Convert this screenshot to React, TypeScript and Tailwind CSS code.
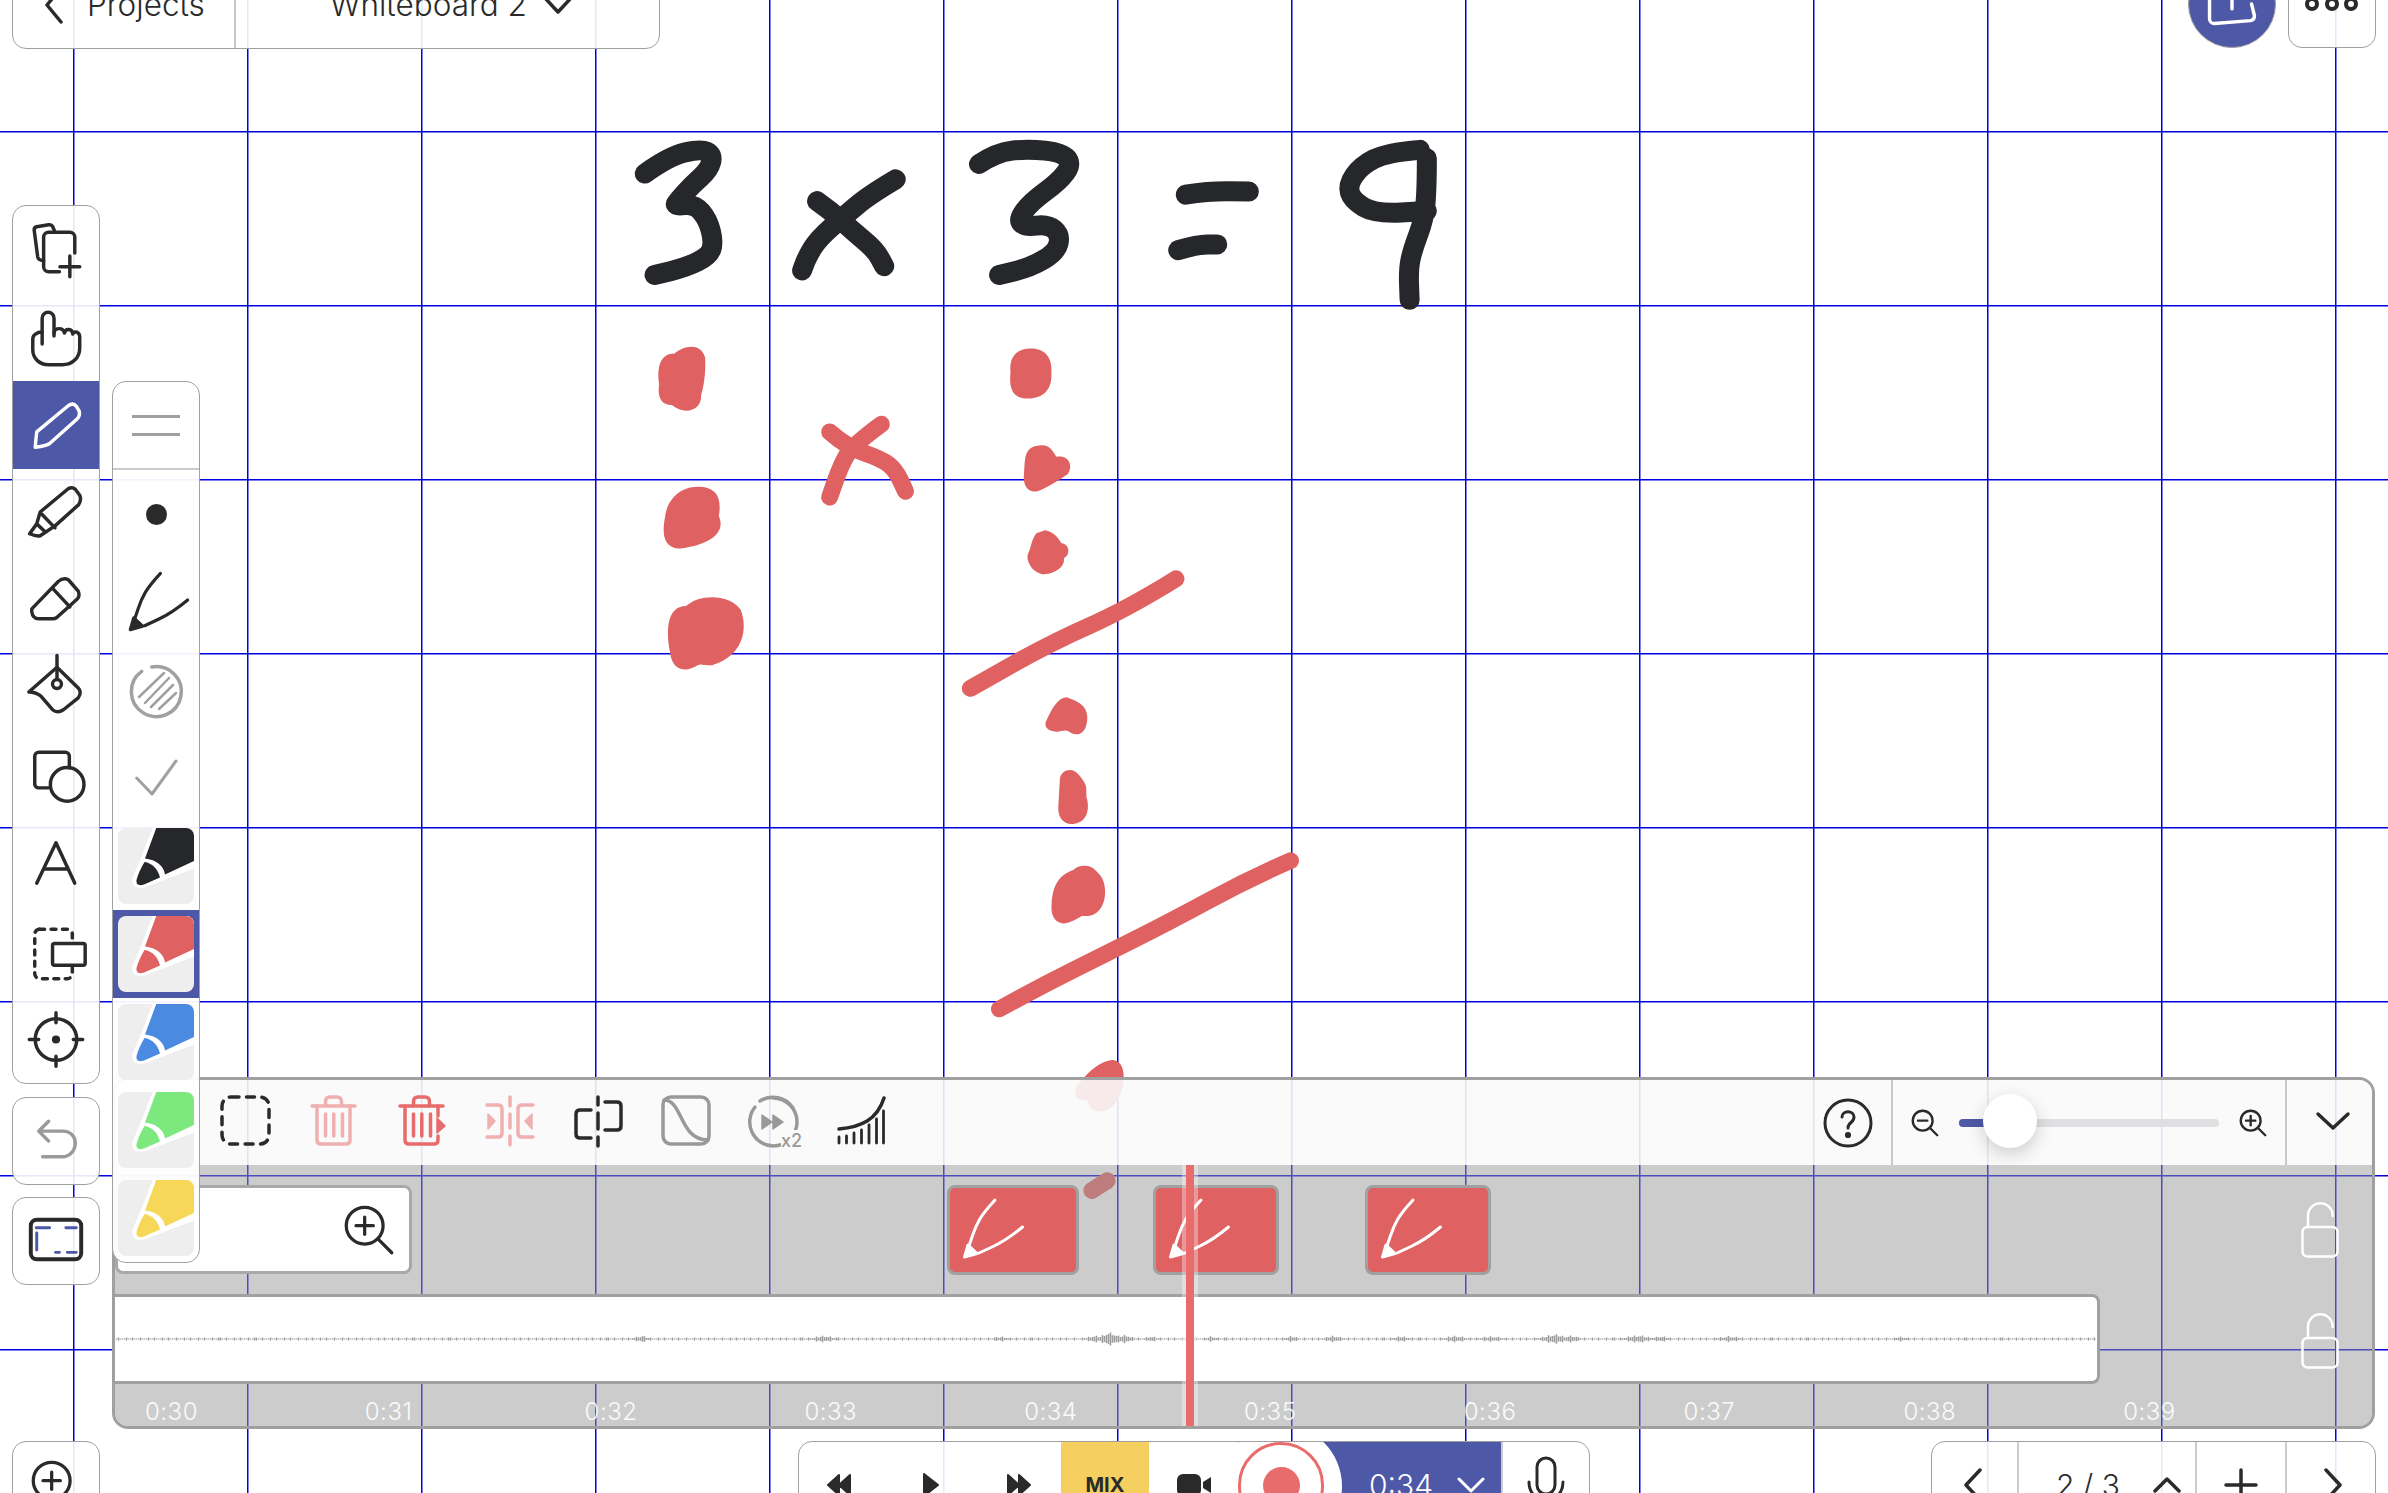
import React from "react";

const INK = "#26272b";
const RED = "#e06161";
const BLUE = "#4d58a6";

type Pt = [number, number];

// turns sampled pen points into a soft curve
function smooth(pts: Pt[]) {
  let d = `M${pts[0][0]} ${pts[0][1]}`;
  for (let i = 1; i < pts.length - 1; i++) {
    const mx = (pts[i][0] + pts[i + 1][0]) / 2;
    const my = (pts[i][1] + pts[i + 1][1]) / 2;
    d += ` Q${pts[i][0]} ${pts[i][1]} ${mx} ${my}`;
  }
  const last = pts[pts.length - 1];
  return d + ` L${last[0]} ${last[1]}`;
}

const blackStrokes: Pt[][] = [
  [[78, 140], [120, 95], [175, 75], [197, 90], [190, 130], [160, 170], [135, 212], [130, 225], [165, 220], [188, 260], [198, 320], [190, 355], [150, 385], [95, 405]],
  [[378, 212], [400, 235], [440, 290], [480, 340], [495, 382]],
  [[515, 155], [470, 195], [430, 245], [380, 310], [360, 360], [352, 393]],
  [[660, 115], [690, 85], [745, 75], [805, 85], [822, 115], [800, 160], [750, 215], [728, 260], [740, 280], [780, 272], [802, 300], [795, 345], [750, 385], [695, 405]],
  [[1020, 195], [1060, 186], [1130, 187]],
  [[1007, 340], [1040, 325], [1075, 325]],
  [[1428, 78], [1370, 85], [1325, 120], [1302, 170], [1310, 210], [1350, 245], [1440, 238]],
  [[1440, 100], [1440, 180], [1435, 260], [1415, 340], [1408, 390], [1410, 470]],
];

const redStrokes: Pt[][] = [
  [[400, 815], [430, 855], [490, 885], [515, 915], [532, 970]],
  [[490, 795], [440, 850], [420, 900], [400, 985]],
];

const redBlobs = [
  "M130 610 C145 590 175 580 183 620 C185 660 180 700 176 720 C178 755 150 775 125 745 C105 745 100 720 103 690 C100 660 100 610 130 610 Z",
  "M170 958 C205 958 212 990 207 1035 C220 1080 190 1110 140 1120 C110 1120 108 1080 113 1040 C115 1000 135 958 170 958 Z",
  "M150 1270 C170 1240 225 1235 245 1280 C258 1330 250 1400 195 1425 C180 1425 175 1420 170 1425 C150 1445 125 1440 122 1390 C115 1340 115 1270 150 1270 Z",
  "M750 597 C780 597 788 630 786 660 C788 700 775 728 745 728 C718 728 712 700 715 660 C712 620 725 597 750 597 Z",
  "M770 850 C785 850 790 870 795 880 C815 875 825 900 815 925 C795 945 780 960 762 970 C745 975 738 955 738 935 C740 900 738 870 750 858 C755 852 765 850 770 850 Z",
  "M775 1072 C790 1075 800 1095 803 1105 C818 1108 820 1135 808 1145 C810 1170 790 1187 770 1187 C750 1180 742 1150 745 1135 C752 1115 750 1100 760 1080 Z",
];

const lowerBlobs = [
  "M500 -8 C520 0 560 10 562 50 C562 95 540 110 515 100 C495 85 490 95 470 95 C440 95 430 75 440 60 C455 30 470 -5 500 -8 Z",
  "M510 210 C530 210 545 235 552 245 C565 265 555 280 562 300 C570 345 550 372 515 372 C485 372 473 345 475 320 C477 290 478 260 480 235 C482 220 495 210 510 210 Z",
  "M555 497 C580 497 590 515 600 525 C617 545 622 590 605 620 C590 645 570 650 545 648 C525 660 505 672 485 670 C460 665 452 640 455 610 C458 560 475 525 520 510 C530 500 540 497 555 497 Z",
  "M635 1080 C665 1080 675 1110 670 1150 C665 1200 630 1235 600 1235 C575 1235 565 1215 560 1200 C535 1205 515 1185 530 1160 C555 1125 595 1085 635 1080 Z",
];

function Whiteboard() {
  const vertical = Array.from({ length: 14 }, (_, i) => 73.75 + i * 174);
  const horizontal = Array.from({ length: 8 }, (_, i) => 131.75 + i * 174);
  return (
    <svg className="absolute inset-0" width="2388" height="1493" viewBox="0 0 2388 1493" fill="none">
      {vertical.map((x) => (
        <line key={x} x1={x} y1="0" x2={x} y2="1493" stroke="#0000e0" strokeWidth="1.5" />
      ))}
      {horizontal.map((y) => (
        <line key={y} x1="0" y1={y} x2="2388" y2={y} stroke="#0000e0" strokeWidth="1.5" />
      ))}
      <g transform="translate(600 120) scale(0.5742 0.3827)" strokeLinecap="round" strokeLinejoin="round">
        {blackStrokes.map((s, i) => (
          <path key={i} d={smooth(s)} stroke={INK} strokeWidth="20" vectorEffect="non-scaling-stroke" />
        ))}
        {redStrokes.map((s, i) => (
          <path key={i} d={smooth(s)} stroke={RED} strokeWidth="17" vectorEffect="non-scaling-stroke" />
        ))}
        {redBlobs.map((d, i) => (
          <path key={i} d={d} fill={RED} />
        ))}
        <path d={smooth([[1003, 1199], [918, 1278], [785, 1366], [645, 1485]])} stroke={RED} strokeWidth="17" vectorEffect="non-scaling-stroke" />
      </g>
      <g transform="translate(900 700) scale(0.3333)" strokeLinecap="round">
        {lowerBlobs.map((d, i) => (
          <path key={i} d={d} fill={RED} />
        ))}
        <path d={smooth([[1172, 482], [1050, 535], [800, 670], [600, 770], [440, 850], [298, 927]])} stroke={RED} strokeWidth="50" />
        <path d="M575 1472 L622 1442" stroke={RED} strokeWidth="50" />
      </g>
    </svg>
  );
}

const panel = "absolute bg-white/90 border-[1.5px] border-[#a0a0a0] rounded-[14px]";

function Glyph({ children, className = "", w = 87, h = 88, sw = 3.5 }: { children: React.ReactNode; className?: string; w?: number; h?: number; sw?: number }) {
  return (
    <svg viewBox={`0 0 ${w} ${h}`} width={w} height={h} className={className} fill="none" stroke="currentColor" strokeWidth={sw} strokeLinecap="round" strokeLinejoin="round">
      {children}
    </svg>
  );
}

const tools: React.ReactNode[] = [
  <>
    <path d="M42.5 26 L40 20 Q39 18 36 18.5 L24 20.5 Q21 21 21.5 24.5 L25 51 Q25.5 54 31 55" />
    <path d="M62.5 47 V31 a5 5 0 0 0 -5 -5 H36 a5 5 0 0 0 -5 5 V61 a5 5 0 0 0 5 5 H47" />
    <path d="M47.5 61 H67.5 M57.5 50 V71" />
  </>,
  <>
    <path d="M29.5 50 V24 a6 6 0 0 1 12 0 V42" />
    <path d="M41.5 39 C42 33 51 33 52 39 M52 39 C53 34 60 34 60.5 40 C62 36 67.5 38 67.5 43 V54 C67.5 64 60 71 50 71 H36 C27 71 20 65 20 56 V45 C20 41 24 38 29.5 38" />
  </>,
  <path d="M24 51 L55.8 24.5 Q61 21 64 25 L67 30 Q68 35 64.8 38 L36.8 63 Q34 65 22.5 66.5 Q23 60 24 51 Z" />,
  <>
    <path d="M27.5 43 L55.8 19.5 Q60 17 63 20 L67.5 26 Q69.5 31 66.5 35.5 L42.5 57 L27.5 67 Q24 68 16.8 65 L24 55 Z" />
    <path d="M29 45 L42.5 59 M24 55 L32.5 63" />
  </>,
  <>
    <path d="M19 52 L46 24 Q51 20 56 22.5 L66 34 Q68 39 65 42 L44 61 Q42.5 62 40 62 H26 Q20 62 19 55 Z" />
    <path d="M40.8 32 L57.5 50" />
  </>,
  <>
    <path d="M44.5 11 V35" />
    <circle cx="44.5" cy="40" r="4.5" />
    <path d="M44.5 23 L16 48 Q23 48 28 52 L40 66 Q45 70 51 66 L66 54 Q70 48 66 44 Z" />
  </>,
  <>
    <path d="M36 56 H26 a4 4 0 0 1 -4 -4 V24 a4 4 0 0 1 4 -4 H53 a4 4 0 0 1 4 4 V36" />
    <circle cx="54.8" cy="52.5" r="17" />
  </>,
  <path d="M24 63.5 L43.5 22.6 L62.5 63.5 M32 49 H56" />,
  <>
    <rect x="22" y="22" width="38" height="50" rx="5" strokeDasharray="5 6.5" />
    <rect x="40" y="36.5" width="33" height="22" rx="2" fill="#fff" />
  </>,
  <>
    <circle cx="43.5" cy="44.5" r="21" />
    <path d="M43.5 17.5 V27.5 M43.5 61.5 V71.5 M16.5 44.5 H26 M61 44.5 H70.5" />
    <circle cx="43.5" cy="44.5" r="2.4" fill="currentColor" />
  </>,
];

function PenTip({ color, sw = 3 }: { color: string; sw?: number }) {
  return (
    <g stroke={color} strokeWidth={sw} fill="none" strokeLinecap="round" strokeLinejoin="round">
      <path d={smooth([[48, 15], [37, 27], [28.7, 41], [22, 61]])} />
      <path d={smooth([[75.5, 42], [60, 55], [32, 68]])} />
      <path d="M21 60 L17.5 72 L30 68.5 Z" fill={color} />
    </g>
  );
}

function Swatch({ color, selected }: { color: string; selected?: boolean }) {
  return (
    <div className={selected ? "flex h-[88px] items-center justify-center bg-[#4d58a6]" : "flex h-[88px] items-center justify-center"}>
      <svg viewBox="0 0 76 76" className="h-[76px] w-[76px] overflow-hidden rounded-[8px] bg-[#eeeeee]">
        <path d="M37 -2 L24.5 30 L16 50 Q14 60 26 58 L78 38 V-2 Z" fill="#fff" stroke="#fff" strokeWidth="3" />
        <path d="M39 -2 H70 Q76 -2 76 6 V33 L47 46.5 C46 38 38 31.5 27 30.5 Z" fill={color} />
        <path d="M26.5 34 C34 35 40 41 42 49.5 L26 56.5 C21 58 18 57 18.5 52 C20 46 23 40 26.5 34 Z" fill={color} />
      </svg>
    </div>
  );
}

function PenPanel() {
  return (
    <div className={`${panel} left-[112px] top-[381px] z-20 w-[88px] overflow-hidden !bg-white/95`}>
      <div className="flex h-[88px] flex-col items-center justify-center gap-[15px] border-b-2 border-[#cccccc]">
        <div className="h-[3px] w-[48px] bg-[#a0a0a0]" />
        <div className="h-[3px] w-[48px] bg-[#a0a0a0]" />
      </div>
      <div className="flex h-[88px] items-center justify-center">
        <div className="h-[21px] w-[21px] rounded-full bg-[#2a2a2a]" />
      </div>
      <svg viewBox="0 0 87 88" className="block h-[88px] w-full">
        <PenTip color="#2a2a2a" sw={3.2} />
      </svg>
      <div className="text-[#a0a0a0]">
        <Glyph sw={3.5} className="block">
          <path d="M38.7 21 A25 25 0 1 1 28.7 25.3" />
          <path d="M26 51 L51 27 M32 57 L56 32 M38 61 L60 39 M46 63 L63 47" strokeWidth="2.5" />
        </Glyph>
        <Glyph sw={3} className="block">
          <path d="M23.7 44 L39 60 L63 27" />
        </Glyph>
      </div>
      <Swatch color={INK} />
      <Swatch color={RED} selected />
      <Swatch color="#4a8ae0" />
      <Swatch color="#7de87e" />
      <Swatch color="#f7d758" />
    </div>
  );
}

function Trash({ color, arrow }: { color: string; arrow?: boolean }) {
  return (
    <Glyph w={88} h={85} className="block" sw={3.5}>
      <g stroke={color}>
        <path d="M23 26 H66 M36.5 25 V22 Q36.5 17 41 17 H48 Q52.5 17 52.5 22 V25" />
        {arrow ? (
          <path d="M28 26 V60 Q28 64 32 64 H57 Q61 64 61 60 V56 M61 26 V36" />
        ) : (
          <path d="M28 26 V60 Q28 64 32 64 H57 Q61 64 61 60 V26" />
        )}
        <path d="M36.5 34 V56 M44.8 34 V56 M53.5 34 V56" />
        {arrow && <path d="M60 38 L68 46 L60 53 Z" fill={color} strokeWidth="1.5" />}
      </g>
    </Glyph>
  );
}

const timelineTools: React.ReactNode[] = [
  <Glyph w={88} h={85} className="block text-[#2a2a2a]">
    <rect x="21" y="17" width="47" height="47" rx="9" strokeDasharray="8 7.5" />
  </Glyph>,
  <Trash color="#f0b0b0" />,
  <Trash color="#e86b6b" arrow />,
  <Glyph w={88} h={85} className="block text-[#f0b0b0]">
    <path d="M45 17 V26 M45 34 V48 M45 56 V65" />
    <path d="M22 25 H33 Q37 25 37 29 V53 Q37 57 33 57 H22" />
    <path d="M68 25 H57 Q53 25 53 29 V53 Q53 57 57 57 H68" />
    <path d="M23 34 L30 41 L23 49 Z M67 34 L60 41 L67 49 Z" fill="currentColor" strokeWidth="1.5" />
  </Glyph>,
  <Glyph w={88} h={85} className="block text-[#2a2a2a]">
    <path d="M45 17 V25 M45 33 V49 M45 57 V66" />
    <path d="M38 30 H27 Q23 30 23 34 V54 Q23 58 27 58 H38" />
    <path d="M52 22 H64 Q68 22 68 26 V46 Q68 50 64 50 H52" />
  </Glyph>,
  <Glyph w={88} h={85} className="block text-[#999999]">
    <rect x="22" y="17" width="46" height="47" rx="8" />
    <path d="M23 20 C42 20 38 60 67 60" />
  </Glyph>,
  <Glyph w={88} h={85} className="block text-[#999999]">
    <path d="M44 18 A24 24 0 1 1 44 66 A24 24 0 0 1 26 27 M31 21 A24 24 0 0 1 64 28 " />
    <path d="M33 35 L43 42 L33 49 Z M44 35 L54 42 L44 49 Z" fill="currentColor" strokeWidth="1.5" />
    <rect x="52" y="50" width="24" height="20" fill="#fafafa" stroke="none" />
    <text x="52" y="67" fontFamily="Inter, sans-serif" fontSize="18" fill="currentColor" stroke="none" fontWeight="500">x2</text>
  </Glyph>,
  <Glyph w={88} h={85} className="block text-[#2a2a2a]">
    <path d="M22 63 V57 M29.5 63 V56 M37 63 V53 M44.5 63 V50 M52 63 V45 M59.5 63 V39 M66.5 63 V31" strokeWidth="2.8" />
    <path d="M22 49 C44 47 60 40 67 18" />
  </Glyph>,
];

function Magnifier({ size, plus, minus, sw = 3.5 }: { size: number; plus?: boolean; minus?: boolean; sw?: number }) {
  return (
    <svg viewBox="0 0 48 48" width={size} height={size} fill="none" stroke="#2a2a2a" strokeWidth={sw} strokeLinecap="round">
      <circle cx="20" cy="20" r="17" />
      <path d="M32.5 32.5 L45 45" />
      {(plus || minus) && <path d="M12 20 H28" />}
      {plus && <path d="M20 12 V28" />}
    </svg>
  );
}

function Waveform() {
  const bursts: [number, number, number][] = [
    [822, 8, 2], [1092, 5, 2], [1108, 8, 5.5], [1124, 5, 3], [1150, 4, 1.5], [1332, 6, 2], [1454, 8, 2], [1553, 10, 3.5], [1570, 5, 2],
    [1637, 10, 2.5], [1660, 6, 1.5], [1728, 8, 1.5], [1290, 5, 1.5], [640, 6, 1.5], [1000, 5, 1], [1900, 5, 1], [1400, 6, 1.5], [1490, 8, 1.5], [1210, 4, 1.5],
  ];
  let d = "";
  for (let x = 0; x < 1979; x += 2) {
    const abs = x + 115;
    const noise = ((abs * 7919) % 97) / 97;
    let a = 0.6 + (noise > 0.7 ? 0.9 : 0);
    for (const [c, w, h] of bursts) {
      const k = (abs - c) / w;
      a += h * Math.exp(-k * k) * (0.6 + 0.4 * noise);
    }
    d += `M${x} ${(42 - a).toFixed(1)}V${(42 + a).toFixed(1)}`;
  }
  return (
    <svg viewBox="0 0 1979 84" className="h-full w-full" fill="none">
      <path d={d} stroke="#9c9c9c" strokeWidth="1.5" />
    </svg>
  );
}

function Lock({ className }: { className: string }) {
  return (
    <svg viewBox="0 0 38 56" width="38" height="56" fill="none" stroke="#fff" strokeWidth="2.5" strokeLinecap="round" className={className}>
      <rect x="1.5" y="25" width="35" height="29.5" rx="5" />
      <path d="M7 25 V13.5 a12.3 12.3 0 0 1 24.7 0 V14" />
    </svg>
  );
}

const clips = ["left-[832px] w-[132px]", "left-[1038px] w-[126px]", "left-[1250px] w-[126px]"];

function Timeline() {
  const labels = ["0:30", "0:31", "0:32", "0:33", "0:34", "0:35", "0:36", "0:37", "0:38", "0:39"];
  return (
    <div className="absolute left-[112px] top-[1077px] z-10 flex h-[352px] w-[2263px] flex-col overflow-hidden rounded-2xl border-[3px] border-[#a0a0a0]">
      <div className="flex h-[85px] shrink-0 items-center bg-[#fafafa]/90 pl-[86px]">
        {timelineTools.map((icon, i) => (
          <div key={i} className="flex h-full w-[88px] items-center justify-center">
            {icon}
          </div>
        ))}
        <div className="flex-1" />
        <div className="flex h-full w-[88px] items-center justify-center border-r-2 border-[#c8c8c8]">
          <svg viewBox="0 0 50 50" width="50" height="50" fill="none" stroke="#2a2a2a" strokeWidth="3" strokeLinecap="round">
            <circle cx="25" cy="25" r="23" />
            <path d="M19 19 C19 12 31 12 31 19 C31 25 25 24 25 30" />
            <circle cx="25" cy="37" r="1.6" fill="#2a2a2a" />
          </svg>
        </div>
        <div className="flex h-full w-[394px] items-center border-r-2 border-[#c8c8c8] pl-[18px]">
          <Magnifier size={28} minus sw={4} />
          <div className="relative mx-[20px] h-[8px] w-[260px] rounded-full bg-[#dfdfe2]">
            <div className="h-full w-[50px] rounded-l-full bg-[#4d58a6]" />
            <div className="absolute left-[24px] top-[-25px] h-[54px] w-[54px] rounded-full bg-white shadow-[0_6px_18px_rgba(0,0,0,0.18)]" />
          </div>
          <Magnifier size={28} plus sw={4} />
        </div>
        <div className="flex h-full w-[85px] items-center justify-center pb-[4px] pl-[6px]">
          <Glyph w={36} h={20} sw={3.5} className="text-[#2a2a2a]">
            <path d="M3 3 L18 17 L33 3" />
          </Glyph>
        </div>
      </div>

      <div className="relative flex-1 bg-[#999999]/50">
        <div className="relative h-[129px]">
          <div className="absolute left-0 top-[20px] flex h-[89px] w-[297px] items-center justify-end rounded-lg border-[3px] border-[#a8a8a8] bg-white pr-[14px]">
            <Magnifier size={52} plus sw={3} />
          </div>
          {clips.map((pos) => (
            <div key={pos} className={`absolute top-[20px] h-[90px] rounded-lg border-[3px] border-[#a0a0a0] bg-[#e06161] ${pos}`}>
              <svg viewBox="0 0 126 84" width="126" height="84" className="-ml-[3px] -mt-[3px]">
                <PenTip color="#fff" />
              </svg>
            </div>
          ))}
          <Lock className="absolute right-[33px] top-[37px]" />
        </div>
        <div className="relative h-[90px]">
          <div className="h-full w-[1985px] rounded-r-lg border-y-[3px] border-r-[3px] border-[#a0a0a0] bg-white">
            <Waveform />
          </div>
          <Lock className="absolute right-[33px] top-[19px]" />
        </div>
        <div className="flex h-[42px] items-center pl-[30px] pt-[14px] text-[24px] font-light tracking-[0.5px] text-white/90">
          {labels.map((t) => (
            <div key={t} className="w-[219.8px] shrink-0">
              {t}
            </div>
          ))}
        </div>
        <div className="absolute inset-y-0 left-[1067px] w-[16px] bg-white/35" />
        <div className="absolute inset-y-0 left-[1071px] w-[8px] bg-[#e96c6c]" />
      </div>
    </div>
  );
}

function Triangles({ dir }: { dir: "left" | "right" }) {
  return (
    <svg viewBox="0 0 26 24" width="26" height="24" fill="#2a2a2a" stroke="#2a2a2a" strokeWidth="2" strokeLinejoin="round" className={dir === "left" ? "-scale-x-100" : ""}>
      <path d="M2 2 L13 12 L2 22 Z M13 2 L24 12 L13 22 Z" />
    </svg>
  );
}

function RecordBar() {
  return (
    <div className={`${panel} left-[798px] top-[1441px] flex h-[88px] w-[792px] overflow-hidden`}>
      <div className="flex h-full w-[80px] items-center justify-center">
        <Triangles dir="left" />
      </div>
      <div className="flex h-full w-[104px] items-center justify-center">
        <svg viewBox="0 0 18 26" width="18" height="26" fill="#2a2a2a" stroke="#2a2a2a" strokeWidth="2" strokeLinejoin="round">
          <path d="M2 2 L16 13 L2 24 Z" />
        </svg>
      </div>
      <div className="flex h-full w-[78px] items-center justify-center pr-[6px]">
        <Triangles dir="right" />
      </div>
      <div className="flex h-full w-[88px] items-center justify-center bg-[#f5d060] text-[20px] font-bold text-[#2a2a2a]">MIX</div>
      <div className="flex h-full w-[89px] items-center justify-center">
        <svg viewBox="0 0 34 22" width="34" height="22" fill="#2a2a2a">
          <rect x="0" y="0" width="24" height="22" rx="6" />
          <path d="M26 8 L34 3 V19 L26 14 Z" />
        </svg>
      </div>
      <div className="relative flex h-full w-[263px] items-center bg-[#4d58a6] pl-[131px] text-[30px] font-light text-white">
        <div className="absolute left-[-18px] top-[-17px] h-[122px] w-[122px] rounded-full bg-white" />
        <div className="absolute left-0 top-0 flex h-[87px] w-[86px] items-center justify-center rounded-full border-[3px] border-[#e96c6c]">
          <div className="h-[37px] w-[37px] rounded-full bg-[#e96c6c]" />
        </div>
        <span>0:34</span>
        <svg viewBox="0 0 28 16" width="28" height="16" fill="none" stroke="#fff" strokeWidth="3" strokeLinecap="round" strokeLinejoin="round" className="ml-[24px]">
          <path d="M2 2 L14 14 L26 2" />
        </svg>
      </div>
      <div className="flex h-full flex-1 items-center justify-center border-l-2 border-[#cccccc]">
        <svg viewBox="0 0 38 56" width="38" height="56" fill="none" stroke="#2a2a2a" strokeWidth="3" strokeLinecap="round" className="mt-[-2px]">
          <rect x="10" y="2" width="18" height="36" rx="9" />
          <path d="M2 26 C2 50 36 50 36 26 M19 44 V54" />
        </svg>
      </div>
    </div>
  );
}

function PageBar() {
  return (
    <div className={`${panel} left-[1931px] top-[1441px] flex h-[88px] w-[445px] overflow-hidden text-[#2a2a2a]`}>
      <div className="flex h-full w-[87px] items-center justify-center border-r-2 border-[#cccccc] pr-[4px]">
        <Glyph w={20} h={36} sw={3.5}>
          <path d="M17 3 L3 18 L17 33" />
        </Glyph>
      </div>
      <div className="flex h-full w-[178px] items-center border-r-2 border-[#cccccc] pl-[37px] text-[30px] font-light">
        <span>2 / 3</span>
        <Glyph w={30} h={18} sw={3.5} className="ml-[32px]">
          <path d="M3 15 L15 3 L27 15" />
        </Glyph>
      </div>
      <div className="flex h-full w-[90px] items-center justify-center border-r-2 border-[#cccccc]">
        <Glyph w={34} h={34} sw={3.5}>
          <path d="M2 17 H32 M17 2 V32" />
        </Glyph>
      </div>
      <div className="flex h-full flex-1 items-center justify-center pl-[4px]">
        <Glyph w={20} h={36} sw={3.5}>
          <path d="M3 3 L17 18 L3 33" />
        </Glyph>
      </div>
    </div>
  );
}

export default function App() {
  return (
    <div className="relative h-[1493px] w-[2388px] overflow-hidden bg-white font-['Inter',sans-serif] text-[#2a2a2a]">
      <Whiteboard />

      {/* top left */}
      <div className={`${panel} left-[12px] top-[-39px] flex h-[88px] w-[648px] items-center overflow-hidden text-[31.5px] font-light`}>
        <div className="flex h-full w-[223px] items-center border-r-2 border-[#c8c8c8] pl-[31px]">
          <Glyph w={20} h={40} sw={3.5} className="mr-[23px]">
            <path d="M17 3 L3 20 L17 37" />
          </Glyph>
          <span>Projects</span>
        </div>
        <div className="flex h-full flex-1 items-center pl-[94px]">
          <span>Whiteboard 2</span>
          <Glyph w={32} h={20} sw={3.5} className="ml-[15px]">
            <path d="M3 3 L16 17 L29 3" />
          </Glyph>
        </div>
      </div>

      {/* top right */}
      <div className="absolute left-[2188px] top-[-40px] flex h-[88px] w-[88px] items-center justify-center rounded-full border border-[#a0a0a0] bg-[#4d58a6]">
        <svg viewBox="0 0 88 88" width="88" height="88" fill="none" stroke="#fff" strokeWidth="3.5" strokeLinecap="round" strokeLinejoin="round">
          <path d="M21 30 V59 a5 5 0 0 0 5 5 L63 61 a5 5 0 0 0 4 -5 L64 44" />
          <path d="M44 20 V49" />
        </svg>
      </div>
      <div className={`${panel} left-[2288px] top-[-40px] flex h-[88px] w-[88px] items-center justify-center`}>
        <svg viewBox="0 0 64 16" width="64" height="16" fill="none" stroke="#2a2a2a" strokeWidth="4">
          <circle cx="12" cy="8" r="5" />
          <circle cx="32" cy="8" r="5" />
          <circle cx="51" cy="8" r="5" />
        </svg>
      </div>

      {/* left rail */}
      <div className={`${panel} left-[12px] top-[205px] w-[88px] overflow-hidden`}>
        {tools.map((icon, i) => (
          <div key={i} className={i === 2 ? "flex h-[87.7px] items-center justify-center bg-[#4d58a6] text-white" : "flex h-[87.7px] items-center justify-center text-[#2a2a2a]"}>
            <Glyph>{icon}</Glyph>
          </div>
        ))}
      </div>
      <div className={`${panel} left-[12px] top-[1097px] flex h-[88px] w-[88px] items-center justify-center text-[#9a9a9a]`}>
        <Glyph>
          <path d="M36 24 L26 34 L36 44 M27 34 H50 C59 34 63 40 63 46 C63 54 57 60 50 60 H30" />
        </Glyph>
      </div>
      <div className={`${panel} left-[12px] top-[1197px] flex h-[88px] w-[88px] items-center justify-center text-[#2a2a2a]`}>
        <Glyph sw={4}>
          <rect x="18" y="22.5" width="51" height="40" rx="6" />
          <path d="M23.5 30.5 H37 M53.5 30.5 H64 M24 36 V53 M43 55.5 H47 M55 55.5 H64" stroke={BLUE} strokeWidth="3" />
        </Glyph>
      </div>
      <div className={`${panel} left-[12px] top-[1441px] flex h-[88px] w-[88px] justify-center pt-[17px]`}>
        <Magnifier size={52} plus sw={3} />
      </div>

      <Timeline />
      <PenPanel />
      <RecordBar />
      <PageBar />
    </div>
  );
}
